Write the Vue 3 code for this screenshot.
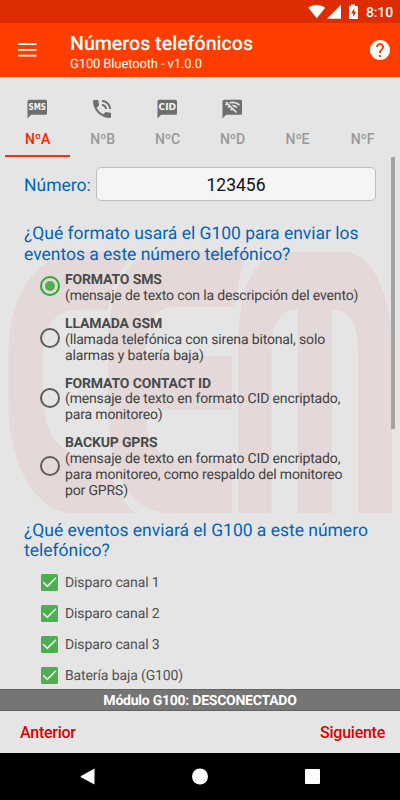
<script setup>
import { ref } from "vue";

const activeTab = ref("A");
const number = ref("123456");
const format = ref("sms");

const tabs = [
  { id: "A", icon: "SMS" },
  { id: "B", icon: "phone" },
  { id: "C", icon: "CID" },
  { id: "D", icon: "offline" },
  { id: "E", icon: "" },
  { id: "F", icon: "" },
];

const formats = [
  { id: "sms", title: "FORMATO SMS", lines: ["(mensaje de texto con la descripción del evento)"] },
  { id: "gsm", title: "LLAMADA GSM", lines: ["(llamada telefónica con sirena bitonal, solo", "alarmas y batería baja)"] },
  { id: "cid", title: "FORMATO CONTACT ID", lines: ["(mensaje de texto en formato CID encriptado,", "para monitoreo)"] },
  {
    id: "gprs",
    title: "BACKUP GPRS",
    lines: ["(mensaje de texto en formato CID encriptado,", "para monitoreo, como respaldo del monitoreo", "por GPRS)"],
  },
];

const events = ref([
  { name: "Disparo canal 1", checked: true },
  { name: "Disparo canal 2", checked: true },
  { name: "Disparo canal 3", checked: true },
  { name: "Batería baja (G100)", checked: true },
]);
</script>

<template>
  <div class="screen">
    <div class="statusbar">
      <svg class="signals" width="52" height="16" viewBox="0 0 52 16">
        <path d="M0.3 3.8C5 0 12.500 0 17.200 3.800L8.800 14.200Z" />
        <path d="M33 0.800V14.800H19Z" />
        <path d="M43 0.500H47.200V2H50V15H41V2H43ZM46.300 4.500L43 9.200H45.100V12.800L48.300 7.800H46.300Z" fill-rule="evenodd" />
      </svg>
      <span class="time">8:10</span>
    </div>

    <header class="appbar">
      <svg class="menu" width="19" height="14" viewBox="0 0 19 14">
        <path d="M0 1.200H18.500M0 6.900H18.500M0 12.600H18.500" />
      </svg>
      <div class="titles">
        <h1>Números telefónicos</h1>
        <p>G100 Bluetooth - v1.0.0</p>
      </div>
      <svg class="help" width="24" height="24" viewBox="0 0 24 24">
        <path d="M12 2C6.480 2 2 6.480 2 12s4.480 10 10 10 10-4.480 10-10S17.520 2 12 2zm1 17h-2v-2h2v2zm2.070-7.750l-.9.920C13.450 12.900 13 13.500 13 15h-2v-.5c0-1.100.45-2.100 1.170-2.830l1.240-1.260c.37-.36.59-.86.59-1.410 0-1.100-.9-2-2-2s-2 .9-2 2H8c0-2.210 1.790-4 4-4s4 1.790 4 4c0 .88-.36 1.680-.930 2.250z" />
      </svg>
    </header>

    <nav class="tabs">
      <button
        v-for="tab in tabs"
        :key="tab.id"
        class="tab"
        :class="{ active: tab.id === activeTab }"
        @click="activeTab = tab.id"
      >
        <svg class="tab-icon" width="24" height="24" viewBox="0 0 24 24">
          <path
            v-if="tab.icon === 'phone'"
            d="M20 15.500c-1.250 0-2.450-.2-3.570-.57-.1-.03-.21-.05-.31-.05-.26 0-.51.1-.71.290l-2.200 2.200c-2.830-1.440-5.150-3.750-6.590-6.580l2.200-2.210c.28-.27.36-.66.250-1.010C8.700 6.450 8.500 5.250 8.500 4c0-.55-.45-1-1-1H4c-.55 0-1 .45-1 1 0 9.390 7.610 17 17 17 .55 0 1-.45 1-1v-3.500c0-.55-.45-1-1-1zM19 12h2c0-4.970-4.030-9-9-9v2c3.870 0 7 3.130 7 7zm-4 0h2c0-2.760-2.240-5-5-5v2c1.660 0 3 1.340 3 3z"
          />
          <path v-else-if="tab.icon" d="M20.500 2.800H4.200C3.200 2.800 2.500 3.500 2.500 4.500V21.500L6.100 17.800H20.500C21.400 17.800 22 17.200 22 16.200V4.500C22 3.500 21.400 2.800 20.500 2.800Z" />
          <text v-if="tab.icon === 'SMS' || tab.icon === 'CID'" x="12.300" y="13.300" textLength="17.500" lengthAdjust="spacingAndGlyphs">{{ tab.icon }}</text>
          <g v-if="tab.icon === 'offline'" class="wifi">
            <path d="M5.500 8C9.500 4.600 15.500 4.600 19.500 8M8 10.500C10.700 8.300 14.300 8.300 17 10.500M10.500 13C11.800 12 13.200 12 14.500 13" />
            <path class="slash-gap" d="M7.500 5L18 15.500" />
            <path d="M6 5L16.500 15.500" />
          </g>
        </svg>
        <span>Nº{{ tab.id }}</span>
      </button>
    </nav>

    <main class="content">
      <svg class="watermark" width="400" height="270" viewBox="0 250 400 270">
        <path d="M140 252H80C35 252 8.500 300 8.500 350V405C8.500 470 40 513 72 513H135C119 500 111 480 108.500 457H84C56 452 43 430 43 390V362C43 330 50 309.500 82 309.500H108C111 285 120 263 140 252Z" />
        <path d="M249 252H165C128 252 108 285 108 350V405C108 470 128 513 170 513H232V459H179C155 459 146 438 145 410H232V356H145C146 325 154 307 174 307H235C237 287 241 267 249 252Z" />
        <path d="M238 513V350C238 287 253 252 292 252H343C374 252 392 298 392 350V513H358V350C358 327 352 309.500 332 309.500V513H298V309.500C278 309.500 271.500 327 271.500 350V513Z" />
      </svg>

      <div class="number-row">
        <label for="number">Número:</label>
        <input id="number" v-model="number" type="text" />
      </div>

      <h2>¿Qué formato usará el G100 para enviar los<br />eventos a este número telefónico?</h2>
      <div class="formats">
        <div v-for="item in formats" :key="item.id" class="format" @click="format = item.id">
          <span class="radio" :class="{ on: format === item.id }"></span>
          <div>
            <strong>{{ item.title }}</strong>
            <p v-for="line in item.lines" :key="line">{{ line }}</p>
          </div>
        </div>
      </div>

      <h2 class="second">¿Qué eventos enviará el G100 a este número<br />telefónico?</h2>
      <div v-for="event in events" :key="event.name" class="event" @click="event.checked = !event.checked">
        <span class="checkbox">
          <svg v-if="event.checked" width="17" height="17" viewBox="0 0 17 17">
            <path d="M2.200 8.300L6.300 12.300L15 3.700" />
          </svg>
        </span>
        <span>{{ event.name }}</span>
      </div>
      <div class="scrollbar"></div>
    </main>

    <div class="module">Módulo G100: DESCONECTADO</div>
    <footer class="footer">
      <button>Anterior</button>
      <button>Siguiente</button>
    </footer>
    <div class="navbar">
      <svg width="400" height="47" viewBox="0 0 400 47">
        <path d="M94.500 15.500V31.500L81 24.300Q80.200 23.700 81 23.100Z" />
        <circle cx="200" cy="23.500" r="8" />
        <rect x="305" y="16" width="15" height="15" rx="1" />
      </svg>
    </div>
  </div>
</template>

<style>
body {
  margin: 0;
  overflow: hidden;
}
</style>

<style scoped>
* {
  box-sizing: border-box;
}
h1,
h2,
p {
  margin: 0;
}
button {
  border: 0;
  padding: 0;
  background: none;
  font-family: inherit;
}
.screen {
  display: flex;
  flex-direction: column;
  width: 400px;
  height: 800px;
  overflow: hidden;
  background: #e5e5e5;
  font-family: Roboto, sans-serif;
  text-rendering: geometricPrecision;
}
.statusbar {
  display: flex;
  flex: none;
  justify-content: flex-end;
  align-items: center;
  height: 23px;
  padding: 1px 7px 0 0;
  background: #dc2c00;
  color: #fff;
}
.signals {
  margin-right: 6px;
  fill: #fff;
}
.time {
  width: 27px;
  padding-top: 1px;
  font-size: 14px;
  letter-spacing: -0.15px;
  font-weight: 500;
  white-space: nowrap;
}
.appbar {
  display: flex;
  flex: none;
  align-items: center;
  height: 55px;
  padding: 0 8px 0 18px;
  border-bottom: 1px solid #efcfc6;
  background: #ff3d00;
  color: #fff;
}
.menu {
  stroke: #fff;
  stroke-width: 1.800;
}
.titles {
  flex: 1;
  padding: 6px 0 0 33px;
}
h1 {
  font-size: 19.600px;
  line-height: 24px;
  font-weight: 500;
}
.titles p {
  font-size: 13px;
  letter-spacing: -0.13px;
  line-height: 18px;
}
.help {
  fill: #fff;
}
.tabs {
  display: flex;
  flex: none;
  height: 79px;
  padding-left: 5px;
}
.tab {
  display: flex;
  flex: none;
  flex-direction: column;
  align-items: center;
  width: 65px;
  padding-top: 19px;
  border-bottom: 2px solid transparent;
  color: #999;
  font-size: 14px;
  letter-spacing: -0.15px;
  line-height: 18px;
  font-weight: 500;
}
.tab.active {
  color: #ff1f00;
  border-bottom-color: #ff2a10;
}
.tab-icon {
  margin: 0 1px 9px 0;
  fill: #6e6e6e;
}
.tab-icon text {
  fill: #f5f5f5;
  font-family: "DejaVu Sans", sans-serif;
  font-size: 8px;
  letter-spacing: 0;
  font-weight: 700;
  text-anchor: middle;
}
.wifi {
  fill: none;
  stroke: #e5e5e5;
  stroke-width: 1.700;
}
.wifi .slash-gap {
  stroke: #6e6e6e;
}
.content {
  position: relative;
  flex: 1;
  min-height: 0;
  padding: 10px 24px 0;
  overflow: hidden;
}
.watermark {
  position: absolute;
  top: 93px;
  left: 0;
  fill: #e5d8d8;
}
.number-row,
.formats,
h2 {
  position: relative;
}
.number-row {
  display: flex;
  align-items: center;
  height: 34px;
}
.number-row label {
  width: 72px;
  padding-top: 3px;
  color: #0063bd;
  font-size: 17.500px;
}
.number-row input {
  width: 280px;
  height: 34px;
  padding: 2px 0 0;
  border: 1px solid #bdbdbd;
  border-radius: 5px;
  background: #f5f5f5;
  color: #111;
  font-family: inherit;
  font-size: 17.500px;
  text-align: center;
  outline: 0;
}
h2 {
  margin-top: 23px;
  color: #0063bd;
  font-size: 17.480px;
  line-height: 20.500px;
  font-weight: 400;
  white-space: nowrap;
}
.formats {
  display: flex;
  flex-direction: column;
  gap: 12px;
  padding: 8px 0 0 16px;
}
.format {
  display: flex;
  align-items: center;
  gap: 5px;
  color: #3f4242;
  font-size: 14px;
  letter-spacing: -0.15px;
  line-height: 15.900px;
  white-space: nowrap;
}
.format strong {
  display: block;
  color: #484b4b;
  font-weight: 700;
}
.radio {
  display: flex;
  flex: none;
  align-items: center;
  justify-content: center;
  width: 20px;
  height: 20px;
  margin-bottom: 5px;
  border: 2px solid #5c5c5c;
  border-radius: 50%;
}
.radio.on {
  border-color: #27ac32;
}
.radio.on::after {
  content: "";
  width: 10px;
  height: 10px;
  border-radius: 50%;
  background: #4caf50;
}
.event {
  display: flex;
  align-items: center;
  height: 31px;
  padding-left: 17px;
  gap: 7px;
  color: #505050;
  font-size: 14px;
  letter-spacing: -0.12px;
}
.event span:last-child {
  padding-top: 2px;
}
.second {
  margin-top: 21px;
  margin-bottom: 5px;
}
.checkbox {
  display: flex;
  width: 17px;
  height: 17px;
  border-radius: 1.500px;
  background: #4caf50;
}
.checkbox path {
  fill: none;
  stroke: #f0f0f0;
  stroke-width: 1.600;
}
.scrollbar {
  position: absolute;
  top: 0;
  right: 5px;
  width: 4px;
  height: 272px;
  background: #a3a3a3;
}
.module {
  flex: none;
  height: 22px;
  border-top: 1px solid #626262;
  border-bottom: 1px solid #626262;
  background: #757575;
  color: #fff;
  font-size: 14px;
  letter-spacing: -0.24px;
  line-height: 23px;
  font-weight: 700;
  text-align: center;
}
.footer {
  display: flex;
  flex: none;
  justify-content: space-between;
  height: 42px;
  padding: 0 15px 0 20px;
}
.footer button {
  color: #e00000;
  font-size: 16px;
  letter-spacing: -0.25px;
  font-weight: 500;
}
.navbar {
  flex: none;
  height: 47px;
  background: #000;
}
.navbar svg {
  display: block;
  fill: #fff;
}
</style>
